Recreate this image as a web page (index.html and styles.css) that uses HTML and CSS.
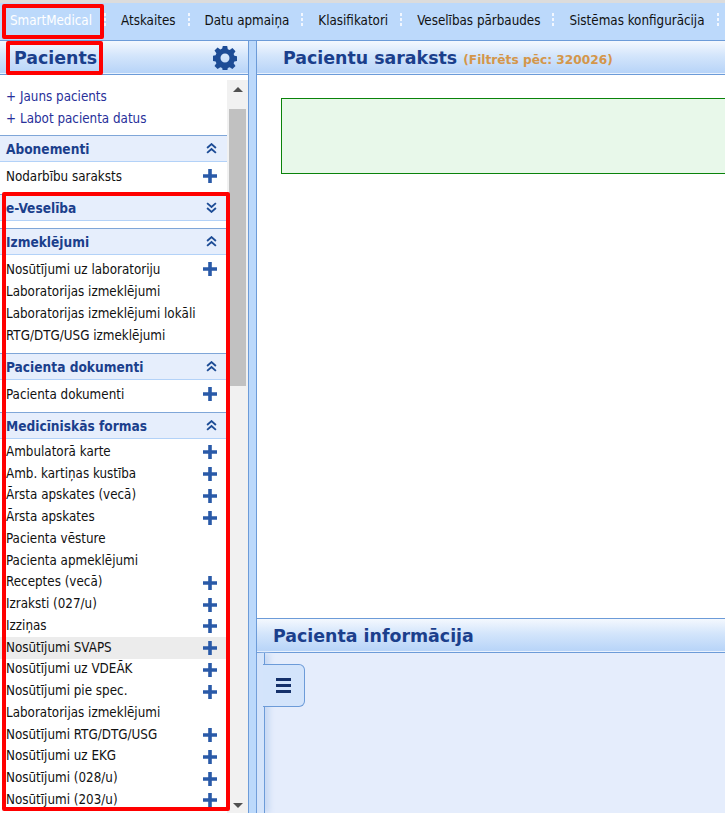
FILE: index.html
```html
<!DOCTYPE html>
<html lang="lv">
<head>
<meta charset="utf-8">
<title>SmartMedical</title>
<link rel="stylesheet" href="styles.css">
</head>
<body>
<svg class="defs" width="0" height="0">
  <symbol id="plus" viewBox="0 0 14 14"><path d="M5.2 0h3.6v5.2H14v3.6H8.8V14H5.2V8.8H0V5.2h5.2z"/></symbol>
  <symbol id="up" viewBox="0 0 10 10"><path d="M1 4.5 5 1l4 3.5M1 9 5 5.500l4 3.500" fill="none" stroke-width="1.700"/></symbol>
  <symbol id="down" viewBox="0 0 10 10"><path d="M1 1l4 3.500L9 1M1 5.500 5 9l4-3.500" fill="none" stroke-width="1.700"/></symbol>
</svg>
<nav class="menubar">
  <a class="menu-item active">SmartMedical</a><i class="sep"></i>
  <a class="menu-item">Atskaites</a><i class="sep"></i>
  <a class="menu-item">Datu apmaiņa</a><i class="sep"></i>
  <a class="menu-item">Klasifikatori</a><i class="sep"></i>
  <a class="menu-item">Veselības pārbaudes</a><i class="sep"></i>
  <a class="menu-item">Sistēmas konfigurācija</a><i class="sep"></i>
</nav>
<div class="workspace">
  <aside class="left">
    <header class="panel-head left-head">
      <h2>Pacients</h2>
      <svg class="gear" viewBox="0 0 24 24"><path fill-rule="evenodd" d="M9.800 0h4.400l.6 3.200 1.900.8 2.700-1.900 3.100 3.100-1.900 2.700.8 1.900 3.200.6v4.400l-3.200.6-.8 1.900 1.900 2.700-3.100 3.100-2.700-1.900-1.900.8-.6 3.200H9.800l-.6-3.200-1.900-.8-2.700 1.900-3.100-3.100 1.900-2.700-.8-1.900-3.200-.6V9.800l3.200-.6.8-1.900L1.500 4.600l3.100-3.100 2.700 1.900 1.900-.8zM12 7.500a4.500 4.500 0 1 0 0 9 4.500 4.500 0 0 0 0-9z"/></svg>
    </header>
    <div class="scroll-wrap">
      <div class="tree">
        <div class="links">
          <a><span>+</span>Jauns pacients</a>
          <a><span>+</span>Labot pacienta datus</a>
        </div>

        <section class="group">
          <h3>Abonementi<svg class="chev"><use href="#up"/></svg></h3>
          <ul>
            <li>Nodarbību saraksts<svg class="plus"><use href="#plus"/></svg></li>
          </ul>
        </section>

        <section class="group collapsed">
          <h3>e-Veselība<svg class="chev"><use href="#down"/></svg></h3>
        </section>

        <section class="group">
          <h3>Izmeklējumi<svg class="chev"><use href="#up"/></svg></h3>
          <ul>
            <li>Nosūtījumi uz laboratoriju<svg class="plus"><use href="#plus"/></svg></li>
            <li>Laboratorijas izmeklējumi</li>
            <li>Laboratorijas izmeklējumi lokāli</li>
            <li>RTG/DTG/USG izmeklējumi</li>
          </ul>
        </section>

        <section class="group">
          <h3>Pacienta dokumenti<svg class="chev"><use href="#up"/></svg></h3>
          <ul>
            <li>Pacienta dokumenti<svg class="plus"><use href="#plus"/></svg></li>
          </ul>
        </section>

        <section class="group">
          <h3>Medicīniskās formas<svg class="chev"><use href="#up"/></svg></h3>
          <ul class="forms">
            <li>Ambulatorā karte<svg class="plus"><use href="#plus"/></svg></li>
            <li>Amb. kartiņas kustība<svg class="plus"><use href="#plus"/></svg></li>
            <li>Ārsta apskates (vecā)<svg class="plus"><use href="#plus"/></svg></li>
            <li>Ārsta apskates<svg class="plus"><use href="#plus"/></svg></li>
            <li>Pacienta vēsture</li>
            <li>Pacienta apmeklējumi</li>
            <li>Receptes (vecā)<svg class="plus"><use href="#plus"/></svg></li>
            <li>Izraksti (027/u)<svg class="plus"><use href="#plus"/></svg></li>
            <li>Izziņas<svg class="plus"><use href="#plus"/></svg></li>
            <li class="hover">Nosūtījumi SVAPS<svg class="plus"><use href="#plus"/></svg></li>
            <li>Nosūtījumi uz VDEĀK<svg class="plus"><use href="#plus"/></svg></li>
            <li>Nosūtījumi pie spec.<svg class="plus"><use href="#plus"/></svg></li>
            <li>Laboratorijas izmeklējumi</li>
            <li>Nosūtījumi RTG/DTG/USG<svg class="plus"><use href="#plus"/></svg></li>
            <li>Nosūtījumi uz EKG<svg class="plus"><use href="#plus"/></svg></li>
            <li>Nosūtījumi (028/u)<svg class="plus"><use href="#plus"/></svg></li>
            <li>Nosūtījumi (203/u)<svg class="plus"><use href="#plus"/></svg></li>
          </ul>
        </section>
      </div>
      <div class="scrollbar">
        <span class="arrow-up"></span>
        <span class="thumb"></span>
        <span class="arrow-down"></span>
      </div>
    </div>
  </aside>
  <div class="splitter"></div>
  <main class="right">
    <section class="list-pane">
      <header class="panel-head list-head">
        <h1>Pacientu saraksts <small>(Filtrēts pēc: 320026)</small></h1>
      </header>
      <div class="list-body"><div class="notice"></div></div>
    </section>
    <section class="info-pane">
      <header class="panel-head info-head"><h2>Pacienta informācija</h2></header>
      <div class="info-body">
        <div class="rail"></div>
        <button class="burger" aria-label="Izvēlne"><span></span><span></span><span></span></button>
      </div>
    </section>
  </main>
</div>
<div class="mark mark-logo"></div>
<div class="mark mark-title"></div>
<div class="mark mark-list"></div>
</body>
</html>
```

FILE: styles.css
```css
* { box-sizing: border-box; }
html, body { height: 100%; }
body {
  margin: 0;
  height: 813px;
  overflow: hidden;
  display: flex;
  flex-direction: column;
  font-family: "DejaVu Sans", "Liberation Sans", sans-serif;
  font-stretch: condensed;
  font-size: 13.300px;
  color: #111;
  background: #fff;
  border-top: 3px solid #dcdcdc;
  position: relative;
}
.defs { position: absolute; }

/* menu */
.menubar {
  flex: none;
  height: 38px;
  background: #bcd9fb;
  border-bottom: 1px solid #6c9bd8;
  display: flex;
  align-items: center;
  padding: 0 0 3px 10px;
  white-space: nowrap;
  overflow: hidden;
}
.menu-item { color: #111; }
.menu-item.active { color: #fff; }
.sep {
  flex: none;
  width: 4px;
  height: 14px;
  margin: 0 14px 3px 11px;
  background: radial-gradient(circle, #f2f7ff 1.400px, transparent 1.500px) 0 0 / 4px 5px;
}

/* shared head */
.panel-head {
  flex: none;
  display: flex;
  align-items: center;
  background: linear-gradient(#f4f8fe 0%, #d3e5fb 45%, #b6d3f8 100%);
  border-bottom: 1px solid #6c9bd8;
  box-shadow: inset 0 -1px 0 #e9f2fe;
  color: #1b3f8c;
}
.panel-head h1, .panel-head h2 {
  margin: 0;
  font-family: "DejaVu Sans", sans-serif;
  font-stretch: normal;
  font-weight: 700;
  font-size: 17.400px;
}

/* layout */
.workspace { flex: 1; display: flex; min-height: 0; }
.left { flex: none; width: 248px; display: flex; flex-direction: column; min-height: 0; }
.left-head { height: 34px; justify-content: space-between; padding: 0 11px 0 14px; }
.gear { width: 24px; height: 24px; fill: #1d4c96; }

.scroll-wrap { flex: 1; display: flex; min-height: 0; overflow: hidden; }
.tree { flex: none; width: 227px; overflow: hidden; }
.links { padding: 11px 0 5px 6px; }
.links a { display: block; height: 22px; line-height: 22px; color: #28309a; }
.links span { display: inline-block; width: 14px; }

.group h3 {
  margin: 0;
  height: 27px;
  padding: 0 10px 0 6px;
  display: flex;
  align-items: center;
  justify-content: space-between;
  font-size: 13.600px;
  font-weight: 700;
  color: #1b3f8c;
  background: #e6eefc;
  border-top: 1px solid #7fa6d8;
  border-bottom: 1px solid #b3d2f8;
}
.group ul { list-style: none; margin: 0; padding: 4px 0 6px; }
.group ul.forms { padding: 2px 0 0; }
.group.collapsed { padding-bottom: 7px; }
.group li {
  height: 22px;
  line-height: 22px;
  padding: 0 10px 0 6px;
  display: flex;
  align-items: center;
  justify-content: space-between;
}
.group ul.forms li { height: 21.750px; }
.group li.hover { background: #ececec; }
.chev { width: 11px; height: 11px; stroke: #1d4c96; }
.plus { width: 14px; height: 14px; fill: #2a5aa8; margin-top: -3px; }
.forms .plus { margin-top: 1px; }

/* scrollbar */
.scrollbar {
  flex: none;
  width: 21px;
  margin-top: 5px;
  background: #f1f1f1;
  display: flex;
  flex-direction: column;
  align-items: center;
}
.arrow-up, .arrow-down { flex: none; width: 0; height: 0; border-left: 5px solid transparent; border-right: 5px solid transparent; }
.arrow-up { margin: 7px 0 17px; border-bottom: 5px solid #505050; }
.thumb { flex: none; width: 17px; height: 277px; background: #c1c1c1; }
.arrow-down { margin: auto 0 5px; border-top: 5px solid #505050; }

.splitter {
  flex: none;
  width: 9px;
  background: #bcd9fb;
  border-left: 1px solid #6c9bd8;
  border-right: 1px solid #6c9bd8;
}

/* right */
.right { flex: 1; min-width: 0; display: flex; flex-direction: column; }
.list-pane { flex: none; height: 577px; display: flex; flex-direction: column; }
.list-head { height: 34px; padding-left: 26px; }
.list-head small { font-size: 12.200px; color: #d4964a; }
.list-body { flex: 1; padding: 23px 0 0 24px; overflow: hidden; }
.notice { width: 600px; height: 76px; background: #e8f8ea; border: 1px solid #0a830a; }

.info-pane { flex: 1; display: flex; flex-direction: column; min-height: 0; }
.info-head { height: 35px; padding-left: 16px; border-top: 1px solid #6c9bd8; }
.info-body { flex: 1; position: relative; display: flex; background: #e5edfc; }
.rail {
  flex: none;
  width: 8px;
  background: #d4e4fb;
  border-right: 1px solid #6c9bd8;
  box-shadow: 4px 0 6px #c4d6f2;
}
.burger {
  position: absolute;
  left: 6px;
  top: 11px;
  width: 42px;
  height: 43px;
  padding: 0;
  display: flex;
  flex-direction: column;
  align-items: center;
  justify-content: center;
  gap: 3px;
  background: #d3e4fb;
  border: 1px solid #6c9bd8;
  border-left: 0;
  border-radius: 0 6px 6px 0;
}
.burger span { width: 15px; height: 3px; background: #14306a; }

/* annotation rectangles */
.mark {
  position: absolute;
  border: 4px solid #f00;
  border-radius: 2px;
  pointer-events: none;
}
.mark-logo { left: 2px; top: 1px; width: 102px; height: 35px; }
.mark-title { left: 6px; top: 38px; width: 97px; height: 34px; }
.mark-list { left: 2px; top: 189px; width: 228px; height: 619px; }
```
